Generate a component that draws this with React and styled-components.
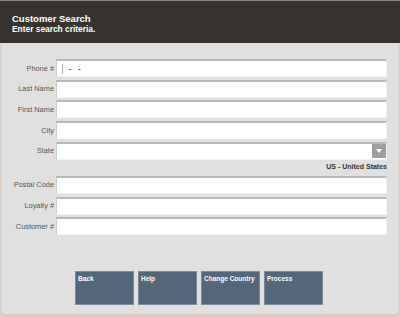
import React from "react";
import styled, { createGlobalStyle } from "styled-components";

const GlobalStyle = createGlobalStyle`
  html, body {
    margin: 0;
    padding: 0;
    background: #e0e0e0;
  }
  body {
    font-family: "Liberation Sans", Arial, sans-serif;
  }
`;

const fields = [
  { label: "Phone #", phone: true },
  { label: "Last Name" },
  { label: "First Name" },
  { label: "City" },
  { label: "State", select: true },
  { note: "US - United States" },
  { label: "Postal Code" },
  { label: "Loyalty #" },
  { label: "Customer #" },
];

const buttons = ["Back", "Help", "Change Country", "Process"];

const App = () => {
  return (
    <Screen>
      <GlobalStyle />
      <Header>
        <Title>Customer Search</Title>
        <Subtitle>Enter search criteria.</Subtitle>
      </Header>
      <Body>
        <Form>
          {fields.map((f, i) =>
            f.note ? (
              <Note key={i}>{f.note}</Note>
            ) : (
              <React.Fragment key={i}>
                <Label>{f.label}</Label>
                <Input>
                  {f.phone && (
                    <>
                      <Caret />
                      <Mask>-&nbsp;&nbsp;-</Mask>
                    </>
                  )}
                  {f.select && <DropButton />}
                </Input>
              </React.Fragment>
            )
          )}
        </Form>
        <ButtonRow>
          {buttons.map((b) => (
            <ActionButton key={b}>{b}</ActionButton>
          ))}
        </ButtonRow>
      </Body>
    </Screen>
  );
};

const Screen = styled.div`
  width: 400px;
  height: 317px;
  display: flex;
  flex-direction: column;
  overflow: hidden;
`;

const Header = styled.div`
  height: 43px;
  box-sizing: border-box;
  padding: 12px 12px 0;
  background: #37332e;
  border-top: 1px solid #8a8681;
  color: #fff;
  font-weight: bold;
`;

const Title = styled.div`
  font-size: 9.5px;
  line-height: 11px;
`;

const Subtitle = styled.div`
  font-size: 8.4px;
  line-height: 11px;
`;

const Body = styled.div`
  flex: 1;
  box-sizing: border-box;
  background: #e0e0e0;
  border-left: 2px solid #dcd2ca;
  border-right: 2px solid #dcd2ca;
  border-bottom: 3px solid #d8cec6;
  padding: 16px 11px 0 0;
  display: flex;
  flex-direction: column;
`;

const Form = styled.div`
  display: grid;
  grid-template-columns: 52px 1fr;
  column-gap: 2px;
  row-gap: 2.7px;
  grid-auto-rows: auto;
`;

const Label = styled.div`
  font-size: 7.4px;
  color: #555;
  text-align: right;
  align-self: center;
  white-space: nowrap;
`;

const Input = styled.div`
  position: relative;
  box-sizing: border-box;
  height: 18px;
  background: #fff;
  border-top: 2px solid #b8b8b8;
  border-left: 1px solid #cfcfcf;
  border-right: 1px solid #f2f2f2;
  border-bottom: 1px solid #f2f2f2;
  display: flex;
  align-items: center;
`;

const Caret = styled.span`
  width: 1px;
  height: 10px;
  margin-left: 5px;
  background: #a8a8a8;
`;

const Mask = styled.span`
  margin-left: 6px;
  font-size: 7px;
  color: #333;
  font-weight: bold;
  letter-spacing: 1px;
`;

const DropButton = styled.span`
  position: absolute;
  right: 0;
  top: 0;
  width: 14px;
  height: 14px;
  background: #9e9e9e;

  &::after {
    content: "";
    position: absolute;
    left: 4px;
    top: 5px;
    border-left: 3.5px solid transparent;
    border-right: 3.5px solid transparent;
    border-top: 4px solid #fff;
  }
`;

const Note = styled.div`
  grid-column: 1 / -1;
  height: 10.8px;
  text-align: right;
  font-size: 7px;
  font-weight: bold;
  color: #333;
  line-height: 10px;
`;

const ButtonRow = styled.div`
  display: flex;
  justify-content: center;
  gap: 4px;
  margin-top: 36px;
  padding-left: 9px;
`;

const ActionButton = styled.div`
  width: 59px;
  height: 34px;
  box-sizing: border-box;
  background: #546679;
  border: 1px solid #7b8a99;
  color: #fff;
  font-size: 6.5px;
  font-weight: bold;
  padding: 3px 2px;
  white-space: nowrap;
`;

export default App;
